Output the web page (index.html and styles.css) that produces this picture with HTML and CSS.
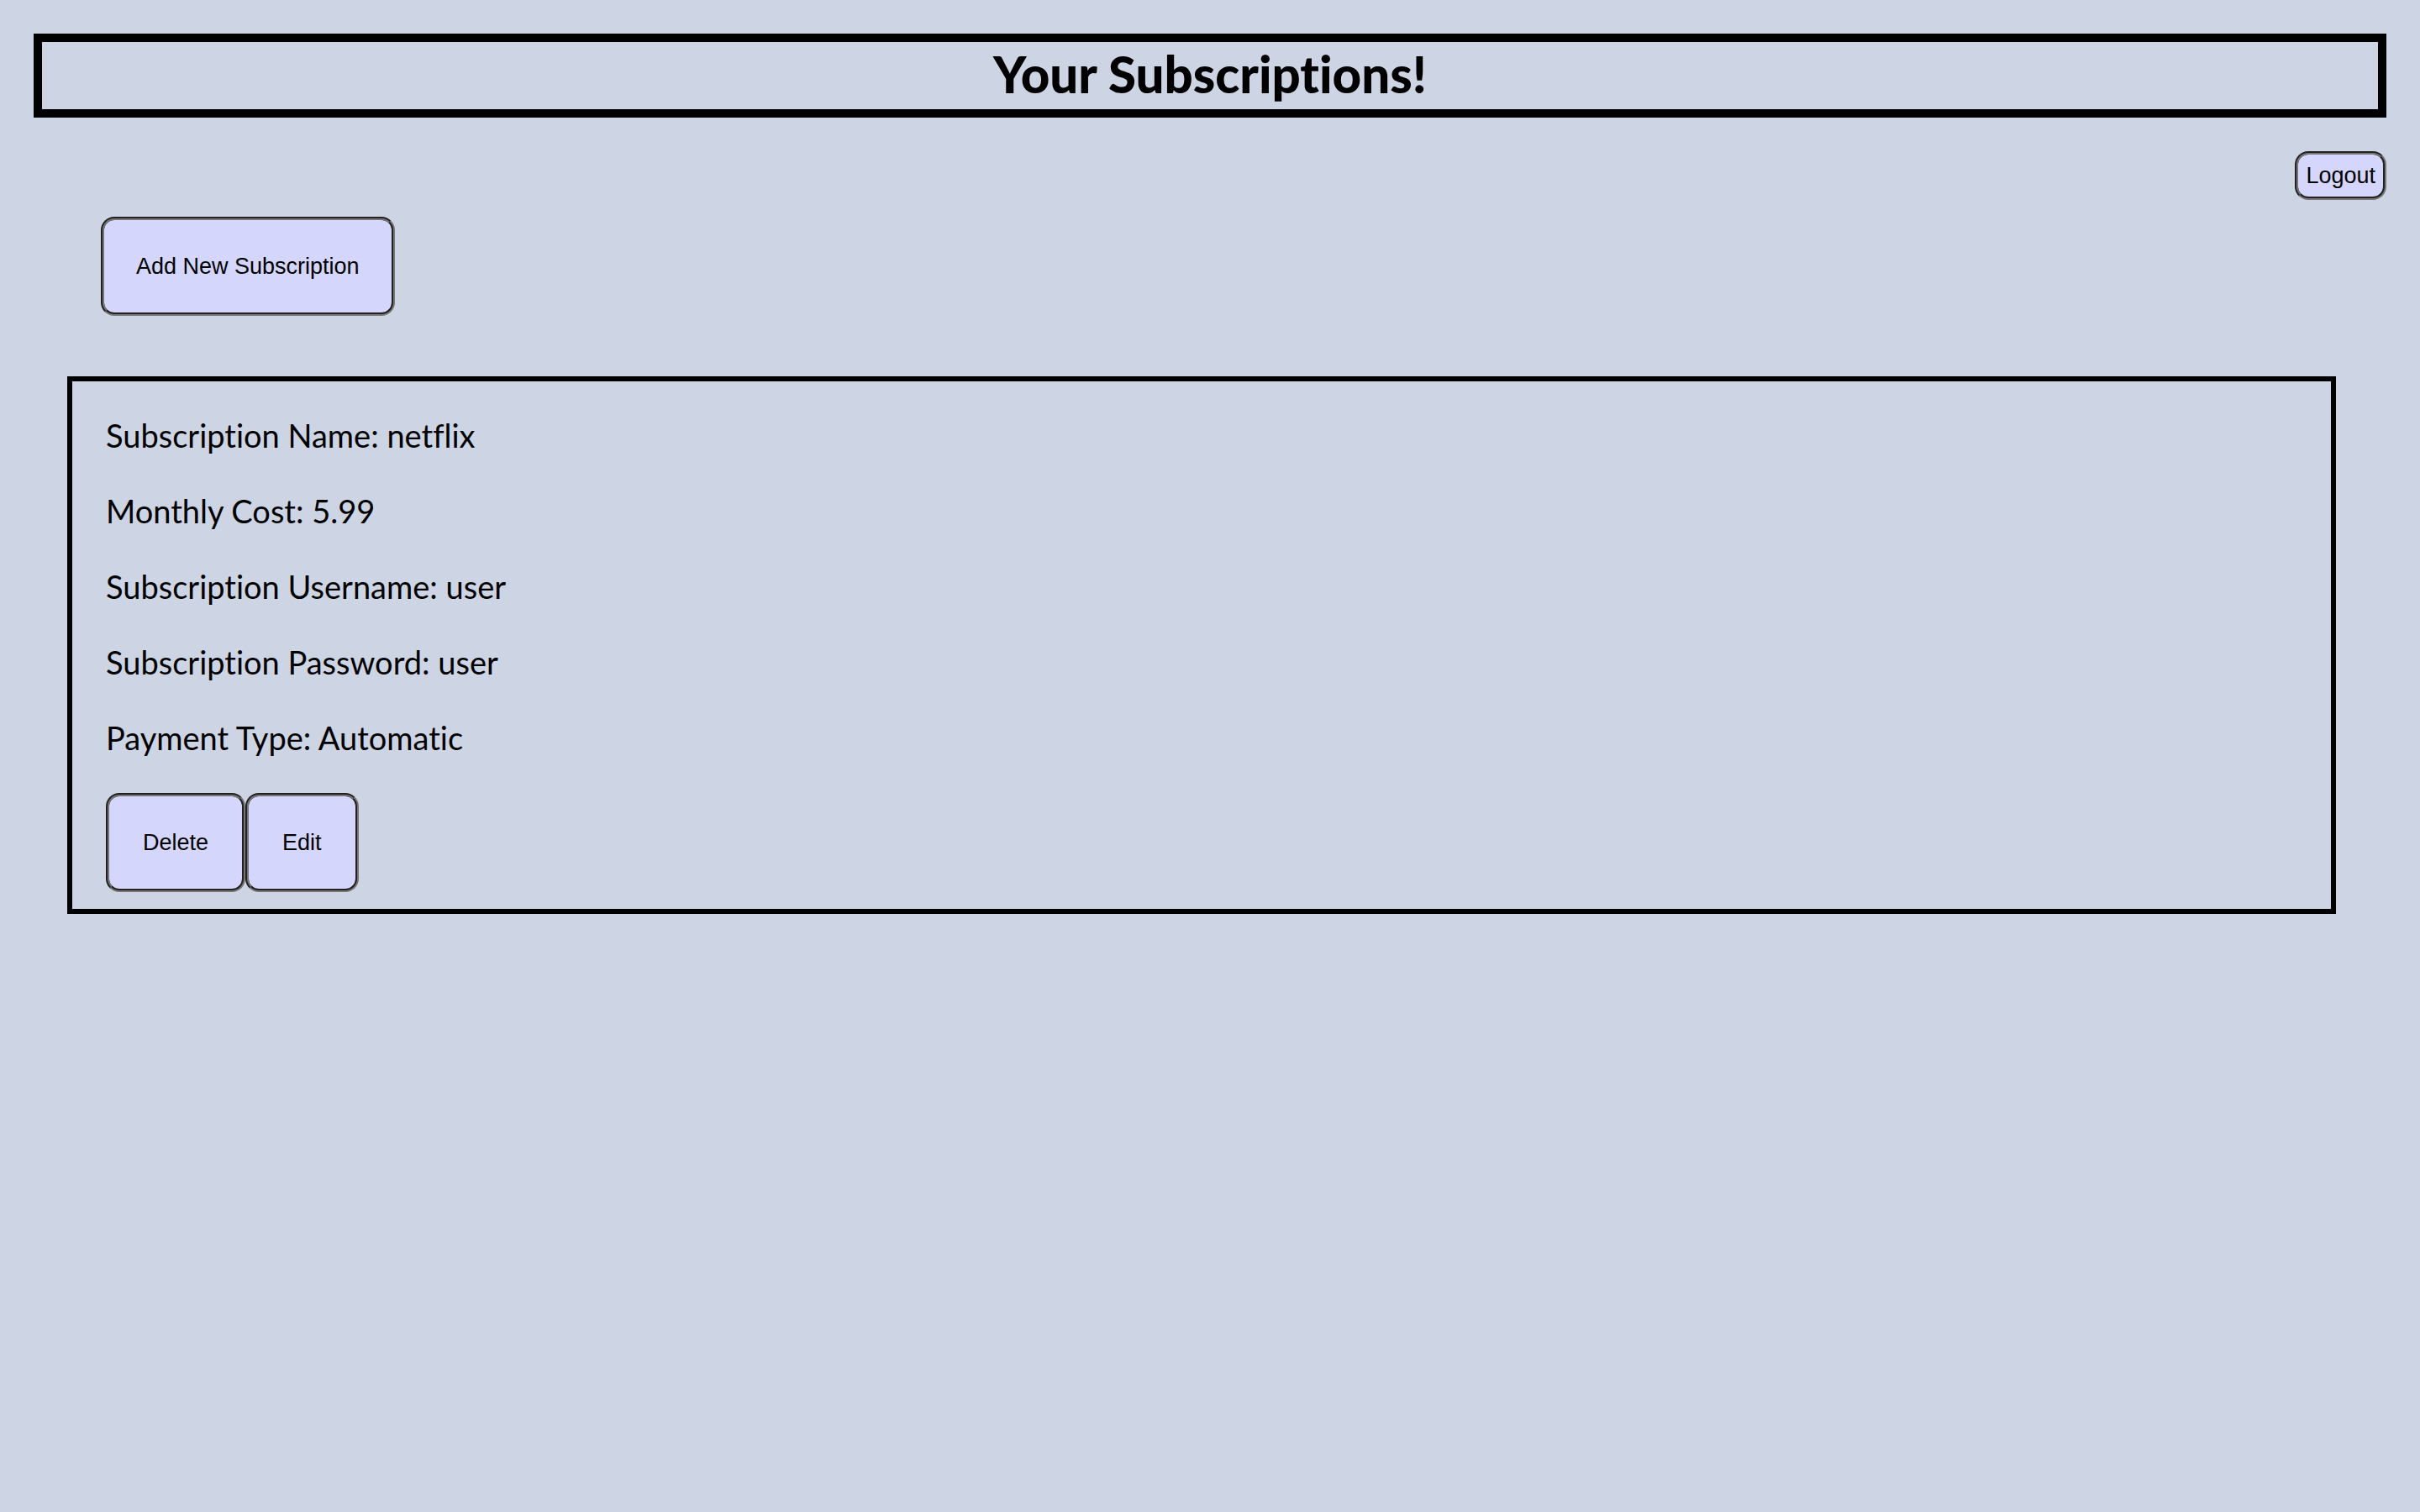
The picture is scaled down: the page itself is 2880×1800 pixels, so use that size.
FILE: index.html
```
<!DOCTYPE html>
<html lang="en">
<head>
<meta charset="utf-8">
<title>Your Subscriptions!</title>
<link rel="stylesheet" href="styles.css">
</head>
<body>
<header class="banner"><h1 class="title">Your Subscriptions!</h1></header>
<nav class="account"><button class="button compact" type="button">Logout</button></nav>
<main class="content">
<div class="toolbar"><button class="button add" type="button">Add New Subscription</button></div>
<article class="card">
<p class="detail">Subscription Name: netflix</p>
<p class="detail">Monthly Cost: 5.99</p>
<p class="detail">Subscription Username: user</p>
<p class="detail">Subscription Password: user</p>
<p class="detail">Payment Type: Automatic</p>
<div class="actions">
<button class="button" type="button">Delete</button>
<button class="button" type="button">Edit</button>
</div>
</article>
</main>
</body>
</html>
```
FILE: styles.css
```
* {
  box-sizing: border-box;
}

body {
  margin: 0;
  padding: 40px;
  min-height: 100vh;
  background: #cdd4e4;
  color: #000;
  font-family: Lato, "Liberation Sans", sans-serif;
  font-variant-ligatures: none;
}

.banner {
  padding-bottom: 4px;
  border: 10px solid #000;
  text-align: center;
}

.title {
  margin: 0;
  font-size: 60px;
  font-weight: 900;
  line-height: 76px;
}

.account {
  display: flex;
  justify-content: flex-end;
  margin: 40px 0 20px;
}

.content {
  padding: 0 60px 0 40px;
}

.toolbar {
  margin: 0 40px 72px;
}

.button {
  display: block;
  padding: 40px;
  border: 4px groove #767676;
  border-radius: 16px;
  background: #d4d6fc;
  color: #000;
  font-family: "Liberation Sans", Arial, sans-serif;
  font-size: 27px;
  line-height: 30px;
}

.add {
  padding: 40px 38px;
}

.compact {
  padding: 10px 9px;
}

.card {
  padding: 40px 40px 20px;
  border: 6px solid #000;
}

.detail {
  margin: 0 0 42px;
  font-size: 38px;
  line-height: 48px;
}

.actions {
  display: flex;
}
```
